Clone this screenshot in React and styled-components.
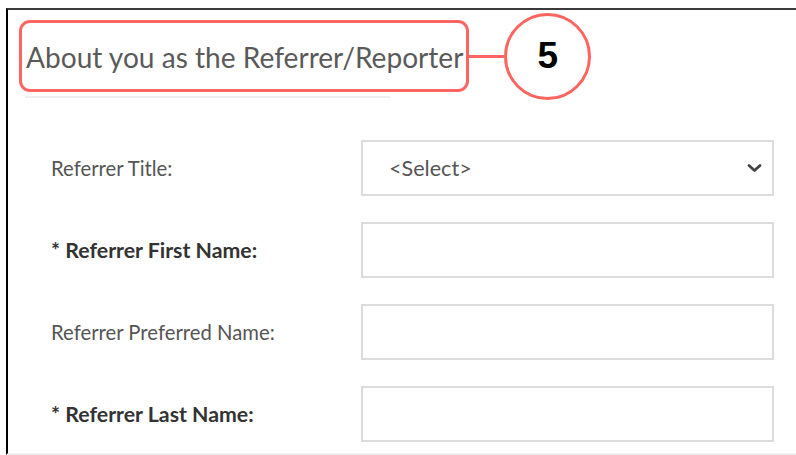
import React from "react";
import styled, { createGlobalStyle } from "styled-components";

const GlobalStyle = createGlobalStyle`
  html, body {
    margin: 0;
    padding: 0;
    background: #ffffff;
  }
  body {
    font-family: Lato, "Liberation Sans", sans-serif;
  }
`;

const Frame = styled.div`
  margin: 8px 0 0 6px;
  height: 447px;
  box-sizing: border-box;
  border-top: 2px solid #3a3a3a;
  border-left: 2px solid #000;
  border-bottom: 2px solid #f0f0f0;
  padding: 10px 0 0 11px;
  overflow: hidden;
`;

const HeaderRow = styled.div`
  display: flex;
  align-items: center;
  height: 72px;
`;

const Callout = styled.div`
  box-sizing: border-box;
  height: 72px;
  display: flex;
  align-items: center;
  padding: 2px 3px 0 4px;
  border: 3px solid #ff6560;
  border-radius: 11px;
`;

const Heading = styled.h2`
  margin: 0;
  font-weight: 400;
  font-size: 28.1px;
  color: #5a5a5a;
  white-space: nowrap;
`;

const Connector = styled.span`
  width: 35px;
  height: 3px;
  background: #ff6560;
`;

const StepBadge = styled.span`
  flex: none;
  box-sizing: border-box;
  width: 87px;
  height: 87px;
  border: 3px solid #ff6560;
  border-radius: 50%;
  display: flex;
  align-items: center;
  justify-content: center;
  font-family: "Liberation Sans", Arial, sans-serif;
  font-weight: 700;
  font-size: 37px;
  color: #000;
`;

const Rule = styled.div`
  margin: 4px 0 0 6px;
  width: 365px;
  height: 2px;
  background: #efefef;
`;

const Form = styled.div`
  display: grid;
  grid-template-columns: 310px 413px;
  row-gap: 26px;
  margin-top: 42px;
  padding-left: 32px;
  align-items: center;
`;

const Label = styled.label`
  font-size: ${(p) => (p.$required ? "21.3px" : "20.3px")};
  font-weight: ${(p) => (p.$required ? 700 : 400)};
  color: ${(p) => (p.$required ? "#333" : "#555")};
`;

const Field = styled.div`
  box-sizing: border-box;
  height: 56px;
  border: 2px solid #dcdcdc;
  background: #fff;
  display: flex;
  align-items: center;
  padding: 0 10px 0 26px;
`;

const Placeholder = styled.span`
  flex: 1;
  font-size: 21.6px;
  color: #555;
`;

const Chevron = () => (
  <svg width="15" height="10" viewBox="0 0 15 10">
    <polyline
      points="2,2.5 7.5,7.5 13,2.5"
      fill="none"
      stroke="#444"
      strokeWidth="2.8"
      strokeLinecap="round"
      strokeLinejoin="round"
    />
  </svg>
);

const fields = [
  { label: "Referrer Title:", select: true },
  { label: "* Referrer First Name:", required: true },
  { label: "Referrer Preferred Name:" },
  { label: "* Referrer Last Name:", required: true },
];

export default function App() {
  return (
    <>
      <GlobalStyle />
      <Frame>
        <HeaderRow>
          <Callout>
            <Heading>About you as the Referrer/Reporter</Heading>
          </Callout>
          <Connector />
          <StepBadge>5</StepBadge>
        </HeaderRow>
        <Rule />
        <Form>
          {fields.map((f) => (
            <React.Fragment key={f.label}>
              <Label $required={f.required}>{f.label}</Label>
              <Field>
                {f.select && (
                  <>
                    <Placeholder>&lt;Select&gt;</Placeholder>
                    <Chevron />
                  </>
                )}
              </Field>
            </React.Fragment>
          ))}
        </Form>
      </Frame>
    </>
  );
}
